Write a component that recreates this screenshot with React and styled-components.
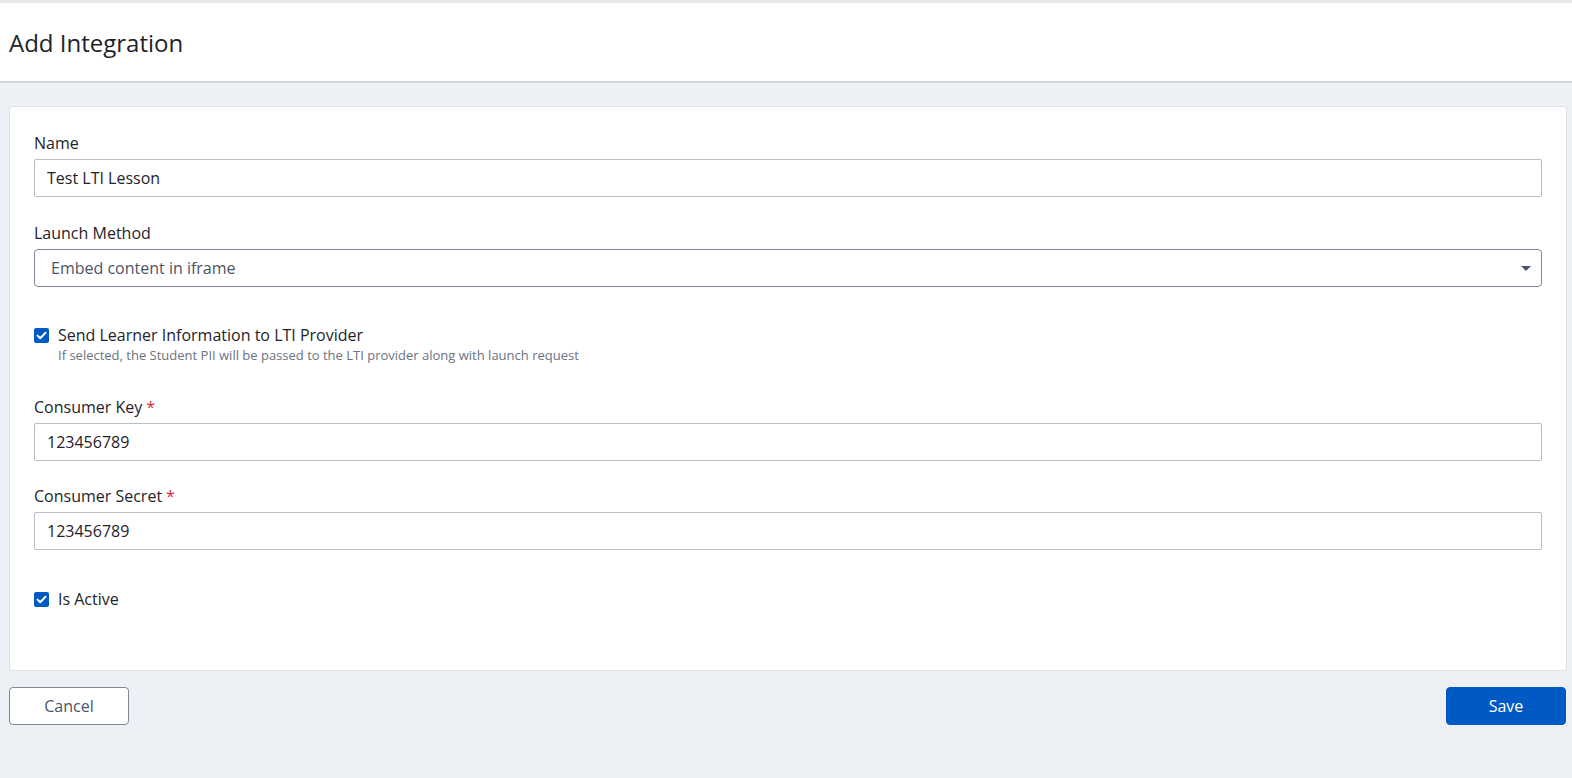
import React from 'react';
import styled, { createGlobalStyle } from 'styled-components';

const colors = {
  bg: '#edf1f5',
  white: '#ffffff',
  text: '#1f2329',
  muted: '#4a5568',
  helper: '#6b7280',
  border: '#b9c0ca',
  selectBorder: '#7d8796',
  card: '#dcdfe3',
  blue: '#005ac4',
  red: '#d62c3b',
};

const GlobalStyle = createGlobalStyle`
  html, body {
    margin: 0;
    padding: 0;
    background: ${colors.bg};
    font-family: "Open Sans", "Noto Sans", sans-serif;
    color: ${colors.text};
    overflow: hidden;
  }
  * { box-sizing: border-box; }
`;

const Page = styled.div`
  height: 778px;
  background: ${colors.bg};
  border-top: 3px solid #e6e8eb;
`;

const Header = styled.header`
  background: ${colors.white};
  height: 80px;
  padding: 0 9px;
  display: flex;
  align-items: center;
  border-bottom: 2px solid #d3d6da;
  h1 {
    margin: 0;
    font-size: 24px;
    font-weight: 400;
    color: ${colors.text};
  }
`;

const Body = styled.main`
  padding: 23px 5px 0 9px;
`;

const Card = styled.section`
  background: ${colors.white};
  border: 1px solid ${colors.card};
  border-radius: 2px;
  padding: 25px 24px 0;
  height: 565px;
  display: flex;
  flex-direction: column;
`;

const Field = styled.div`
  display: flex;
  flex-direction: column;
  margin-bottom: ${p => p.$gap || 25}px;
`;

const Label = styled.label`
  font-size: 16px;
  line-height: 22px;
  margin-bottom: 5px;
  color: ${colors.text};
  span {
    color: ${colors.red};
    margin-left: 4px;
  }
`;

const Input = styled.input`
  height: 38px;
  border: 1px solid ${colors.border};
  border-radius: 2px;
  padding: 0 12px;
  font: inherit;
  font-size: 16px;
  color: ${colors.text};
  outline: none;
`;

const SelectBox = styled.div`
  height: 38px;
  border: 1px solid ${colors.selectBorder};
  border-radius: 4px;
  padding: 0 10px 0 16px;
  display: flex;
  align-items: center;
  justify-content: space-between;
  font-size: 16px;
  color: ${colors.muted};
`;

const Caret = styled.span`
  width: 0;
  height: 0;
  border-left: 5px solid transparent;
  border-right: 5px solid transparent;
  border-top: 5px solid #4a5568;
`;

const CheckRow = styled.div`
  display: flex;
  align-items: flex-start;
  gap: 9px;
  margin-bottom: ${p => p.$gap || 0}px;
`;

const Box = styled.span`
  flex: 0 0 15px;
  width: 15px;
  height: 15px;
  margin-top: 4px;
  border-radius: 2px;
  background: ${colors.blue};
  display: flex;
  align-items: center;
  justify-content: center;
`;

const CheckText = styled.div`
  display: flex;
  flex-direction: column;
  font-size: 16px;
  line-height: 22px;
  small {
    font-size: 13px;
    line-height: 18px;
    color: ${colors.helper};
  }
`;

const Actions = styled.div`
  display: flex;
  justify-content: space-between;
  margin-top: 16px;
  padding-right: 1px;
`;

const Button = styled.button`
  width: 120px;
  height: 38px;
  border-radius: 4px;
  font: inherit;
  font-size: 16px;
  cursor: pointer;
  border: 1px solid ${p => (p.$primary ? colors.blue : '#7d8796')};
  background: ${p => (p.$primary ? colors.blue : colors.white)};
  color: ${p => (p.$primary ? colors.white : colors.muted)};
`;

const Check = () => (
  <Box>
    <svg width="11" height="9" viewBox="0 0 11 9" fill="none">
      <path d="M1.5 4.6 L4.2 7.2 L9.5 1.8" stroke="#fff" strokeWidth="2" strokeLinecap="round" strokeLinejoin="round" />
    </svg>
  </Box>
);

export default function App() {
  return (
    <Page>
      <GlobalStyle />
      <Header>
        <h1>Add Integration</h1>
      </Header>
      <Body>
        <Card>
          <Field>
            <Label>Name</Label>
            <Input defaultValue="Test LTI Lesson" />
          </Field>
          <Field $gap={37}>
            <Label>Launch Method</Label>
            <SelectBox>
              Embed content in iframe
              <Caret />
            </SelectBox>
          </Field>
          <CheckRow $gap={32}>
            <Check />
            <CheckText>
              Send Learner Information to LTI Provider
              <small>If selected, the Student PII will be passed to the LTI provider along with launch request</small>
            </CheckText>
          </CheckRow>
          <Field $gap={24}>
            <Label>Consumer Key<span>*</span></Label>
            <Input defaultValue="123456789" />
          </Field>
          <Field $gap={38}>
            <Label>Consumer Secret<span>*</span></Label>
            <Input defaultValue="123456789" />
          </Field>
          <CheckRow>
            <Check />
            <CheckText>Is Active</CheckText>
          </CheckRow>
        </Card>
        <Actions>
          <Button>Cancel</Button>
          <Button $primary>Save</Button>
        </Actions>
      </Body>
    </Page>
  );
}
